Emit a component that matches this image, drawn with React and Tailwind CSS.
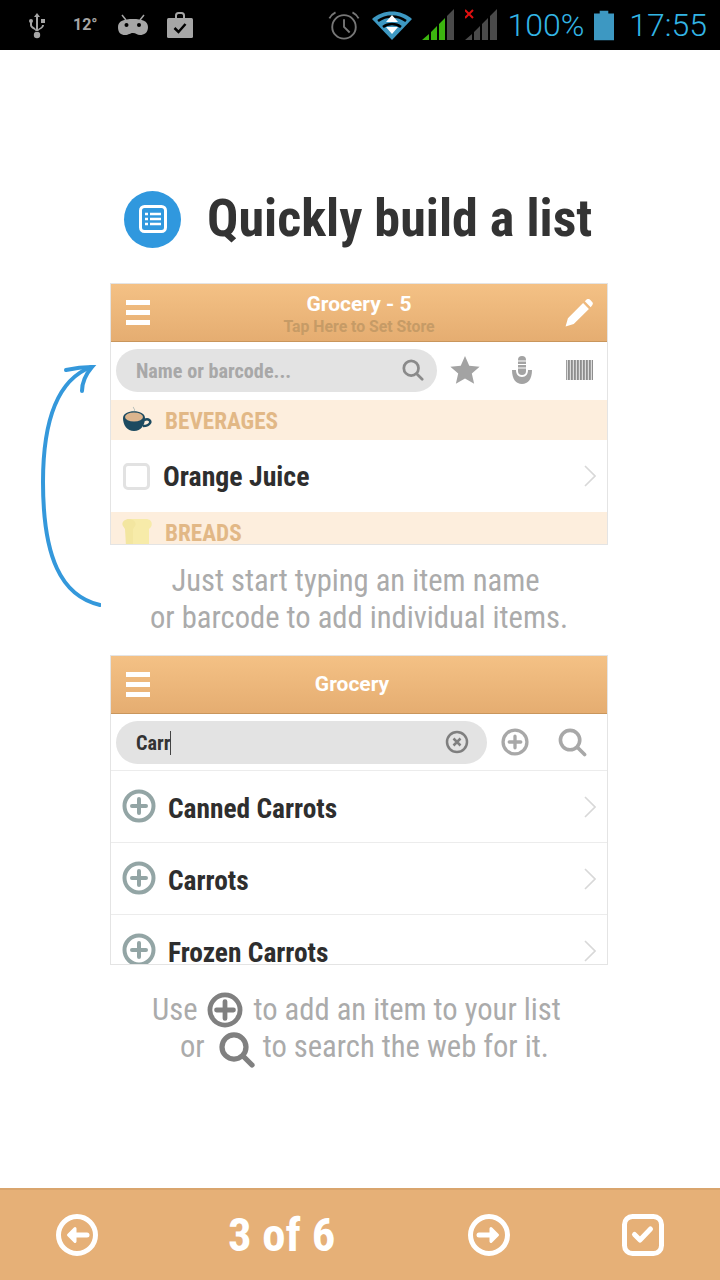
import React from 'react';

const font = "font-['Roboto',sans-serif] [font-stretch:75%]";

const Menu = () => (
  <div className="flex flex-col gap-[5px] w-6">
    <div className="h-[5px] bg-white" />
    <div className="h-[5px] bg-white" />
    <div className="h-[5px] bg-white" />
  </div>
);

const Search = ({ size = 24, color = '#8a8a8a', width = 3 }) => (
  <svg width={size} height={size} viewBox="0 0 24 24" fill="none" stroke={color} strokeWidth={width} strokeLinecap="round">
    <circle cx="10" cy="10" r="8" />
    <path d="M16 16l6 6" />
  </svg>
);

const PlusCircle = ({ size = 34, color = '#93a5a5', width = 4, arm = 7 }) => (
  <svg width={size} height={size} viewBox="0 0 34 34" fill="none" stroke={color} strokeWidth={width} strokeLinecap="round">
    <circle cx="17" cy="17" r={17 - width / 2 - 0.5} />
    <path d={`M${17 - arm} 17h${arm * 2}M17 ${17 - arm}v${arm * 2}`} />
  </svg>
);

const Chevron = () => (
  <svg width="12" height="22" viewBox="0 0 12 22" fill="none" stroke="#d8d8d8" strokeWidth="1.6">
    <path d="M1 1l10 10L1 21" />
  </svg>
);

const Header = ({ children, right }) => (
  <div className="h-[58px] shrink-0 flex items-center justify-between pl-[15px] pr-[14px] bg-gradient-to-b from-[#f4c185] to-[#e5ad71] border-b border-[#c9965c]">
    <Menu />
    {children}
    {right || <div className="w-6" />}
  </div>
);

const Pill = ({ children, className }) => (
  <div className={`h-[43px] ml-[5px] rounded-full bg-[#e3e3e3] flex items-center justify-between pl-[20px] ${className}`}>
    {children}
  </div>
);

const StatusBar = () => (
  <div className="h-[50px] bg-black flex items-center relative shrink-0">
    <div className="flex items-center pl-[27px] flex-1">
      <svg width="20" height="26" viewBox="0 0 20 26" fill="#a6a6a6" className="mt-[1px]">
        <path d="M10 0l3 4h-2v14h-2V4H7z" />
        <circle cx="10" cy="22" r="3.2" />
        <path d="M9 19c0-3-6-3-6-7V9h2v3c0 2 4 2.500 4 5zM11 17c0-2 4-2 4-5h2c0 4-6 4-6 7z" />
        <circle cx="4" cy="8" r="2" />
        <rect x="14" y="6" width="4" height="4" />
      </svg>
      <span className="ml-[26px] w-[24px] text-[16px] font-bold text-[#a6a6a6] font-['Roboto',sans-serif]">12°</span>
      <svg width="30" height="22" viewBox="0 0 30 22" fill="#a6a6a6" className="ml-[21px]">
        <path d="M4 1l4 5M26 1l-4 5" stroke="#a6a6a6" strokeWidth="1.500" />
        <path d="M0 13c0-6 6-8 15-8s15 2 15 8-4 8-8 8c-3 0-4-2-7-2s-4 2-8 2-7-2-7-8z" />
        <circle cx="8.500" cy="11" r="2" fill="#000" />
        <circle cx="21" cy="11" r="2" fill="#000" />
      </svg>
      <svg width="26" height="26" viewBox="0 0 26 26" className="ml-[19px]">
        <path d="M9 6V3.500C9 2 10 1 11.500 1h3C16 1 17 2 17 3.500V6" fill="none" stroke="#a6a6a6" strokeWidth="2" />
        <rect y="6" width="26" height="20" rx="1.500" fill="#a6a6a6" />
        <path d="M7.500 16l4 4 7-8" fill="none" stroke="#000" strokeWidth="2.500" />
      </svg>
    </div>
    <div className="flex items-center pr-[13px]">
      <svg width="32" height="30" viewBox="0 0 34 30" fill="none" stroke="#777" strokeWidth="2">
        <circle cx="17" cy="17" r="12.500" />
        <path d="M17 9v8l6 6" />
        <path d="M1.500 8C3 5 5 3 8 1.500M32.500 8C31 5 29 3 26 1.500" />
      </svg>
      <svg width="40" height="30" viewBox="0 0 40 30" className="ml-[12px]">
        <path d="M0 9C11-1 29-1 40 9L20 30z" fill="#3d98c2" />
        <path d="M6 11c8-6 20-6 28 0M11 17c5-4 13-4 18 0" fill="none" stroke="#000" strokeWidth="2.500" />
        <path d="M20 5l6 7H14zM20 24l6-7H14z" fill="#fff" />
      </svg>
      <svg width="32" height="32" viewBox="0 0 32 32" className="ml-[10px]">
        <path d="M0 31l7-6v6zM9 23l6-6v14H9zM17 15l6-6v22h-6z" fill="#3cb50f" />
        <path d="M25 7l7-7v31h-7z" fill="#4a4a4a" />
      </svg>
      <svg width="32" height="32" viewBox="0 0 32 32" className="ml-[11px]">
        <path d="M0 31l7-6v6zM9 23l6-6v14H9zM17 15l6-6v22h-6zM25 7l7-7v31h-7z" fill="#4a4a4a" />
        <path d="M0 1l8 8M8 1L0 9" stroke="#e01010" strokeWidth="2" />
      </svg>
      <span className="ml-[10px] text-[32px] leading-none text-[#33b5e5] font-['Roboto',sans-serif] font-light">100%</span>
      <svg width="20" height="31" viewBox="0 0 21 31" className="ml-[10px]">
        <path d="M6 0h9v3h6v28H0V3h6z" fill="#3d98c2" />
      </svg>
      <span className="ml-[15px] text-[32px] leading-none text-[#33b5e5] font-['Roboto',sans-serif] font-light">17:55</span>
    </div>
  </div>
);

const FirstPanel = () => (
  <div className="w-[498px] h-[262px] overflow-hidden border border-[#e4e4e4] flex flex-col bg-white">
    <Header
      right={
        <svg width="28" height="28" viewBox="0 0 24 24" fill="#fff">
          <path d="M0.500 23.500l2-7L15.500 3.500l5 5L7.500 21.500zM17 2l1.500-1.500c.8-.8 2-.8 2.800 0l2 2c.8.8.8 2 0 2.800L22 7z" />
        </svg>
      }
    >
      <div className="flex flex-col items-center ml-[3px] -mb-[2px]">
        <span className="text-[21px] leading-[26px] font-bold text-white font-['Roboto',sans-serif]">Grocery - 5</span>
        <span className="text-[15.8px] leading-[20px] font-bold text-[#c69b66] font-['Roboto',sans-serif]">Tap Here to Set Store</span>
      </div>
    </Header>
    <div className="h-[58px] shrink-0 flex items-center pb-[2px]">
      <Pill className="w-[321px] pr-[13px]">
        <span className={`mt-[2px] text-[20.2px] font-bold text-[#a8a8a8] ${font}`}>Name or barcode...</span>
        <Search size={22} />
      </Pill>
      <svg width="30" height="28" viewBox="0 0 24 23" fill="#a3a3a3" className="ml-[13px]">
        <path d="M12 0l3.500 8 8.500.8-6.400 5.600 1.900 8.400L12 18.400 4.500 22.800l1.900-8.400L0 8.800 8.500 8z" />
      </svg>
      <svg width="22" height="28" viewBox="0 0 22 28" className="ml-[31px]">
        <path d="M1 14h4c0 4 2 7 6 7s6-3 6-7h4c0 9-4 14-10 14S1 23 1 14z" fill="#a3a3a3" />
        <rect x="7" y="0" width="8" height="19" rx="4" fill="#a3a3a3" />
        <path d="M7 5h8M7 8.500h8M7 12h8" stroke="#fff" strokeWidth="1" />
      </svg>
      <div className="ml-[33px] w-[27px] h-[20px] bg-[repeating-linear-gradient(90deg,#9e9e9e_0,#9e9e9e_1px,#dcdcdc_1px,#dcdcdc_2px,#8e8e8e_2px,#8e8e8e_3px)]" />
    </div>
    <div className="h-[40px] shrink-0 bg-[#fdeedd] flex items-center pl-[11px]">
      <svg width="30" height="30" viewBox="0 0 30 30" className="-mt-[3px]">
        <path d="M12 3c-2 1 2 2 0 4" fill="none" stroke="#9aa" strokeWidth="0.800" />
        <path d="M1 14c0-9 22-9 22 0 0 7-4 13-11 13S1 21 1 14z" fill="#1c4a60" />
        <ellipse cx="12" cy="13" rx="9" ry="4.500" fill="#dcb58e" />
        <path d="M22 16c5-2 7 1 6 3s-4 3-7 3" fill="none" stroke="#1c4a60" strokeWidth="2.500" />
      </svg>
      <span className={`ml-[13px] mt-[2px] text-[23.2px] font-bold text-[#e2b886] ${font}`}>BEVERAGES</span>
    </div>
    <div className="h-[72px] shrink-0 flex items-center justify-between pl-[12px] pr-[11px]">
      <div className="flex items-center">
        <div className="w-[27px] h-[27px] rounded-[5px] border-[3px] border-[#e2e2e2]" />
        <span className={`ml-[13px] mt-[1px] text-[27.8px] font-bold text-[#2e2e2e] ${font}`}>Orange Juice</span>
      </div>
      <Chevron />
    </div>
    <div className="h-[40px] shrink-0 bg-[#fdeedd] flex items-start pl-[11px]">
      <svg width="30" height="28" viewBox="0 0 30 28" className="mt-[6px]">
        <path d="M9 1h15c5 0 7 4 5 8l-2 2v17H10z" fill="#f7eba9" />
        <path d="M7 1C2 1-1 5 1 8l2 3 1 17h7V11l2-3C15 5 12 1 7 1z" fill="#f3e6a0" />
      </svg>
      <span className={`ml-[13px] mt-[4px] text-[23.2px] font-bold text-[#e2b886] ${font}`}>BREADS</span>
    </div>
  </div>
);

const Row = ({ name }) => (
  <div className="h-[72px] shrink-0 flex items-center justify-between pl-[11px] pr-[11px] border-b border-[#ececec]">
    <div className="flex items-center">
      <PlusCircle />
      <span className={`ml-[12px] mt-[7px] text-[27.4px] font-bold text-[#2e2e2e] ${font}`}>{name}</span>
    </div>
    <Chevron />
  </div>
);

const SecondPanel = () => (
  <div className="w-[498px] h-[310px] overflow-hidden border border-[#e4e4e4] flex flex-col bg-white">
    <Header>
      <span className="text-[21px] font-bold text-white mt-[1px] mr-[15px] font-['Roboto',sans-serif]">Grocery</span>
    </Header>
    <div className="h-[57px] shrink-0 flex items-center border-b border-[#ececec]">
      <Pill className="w-[371px] pr-[18px]">
        <span className={`mt-[2px] text-[20.2px] font-bold text-[#333] border-r border-[#444] leading-[24px] ${font}`}>Carr</span>
        <svg width="24" height="24" viewBox="0 0 24 24" fill="none" stroke="#7f7f7f" strokeWidth="2.500">
          <circle cx="12" cy="12" r="10" />
          <path d="M8.500 8.500l7 7M15.500 8.500l-7 7" />
        </svg>
      </Pill>
      <div className="ml-[14px]"><PlusCircle size={28} color="#a8a8a8" width={4} /></div>
      <div className="ml-[29px]"><Search size={29} color="#a8a8a8" width={3} /></div>
    </div>
    <Row name="Canned Carrots" />
    <Row name="Carrots" />
    <Row name="Frozen Carrots" />
  </div>
);

const NavArrow = ({ right }) => (
  <svg width="42" height="42" viewBox="0 0 42 42" fill="none" stroke="#fff" strokeWidth="5" strokeLinecap="round" strokeLinejoin="round">
    <circle cx="21" cy="21" r="18.500" />
    {right ? (
      <>
        <path d="M11 21h12" />
        <path d="M23 14.500l6.500 6.500-6.500 6.500z" fill="#fff" strokeWidth="3" />
      </>
    ) : (
      <>
        <path d="M31 21H19" />
        <path d="M19 14.500L12.500 21l6.500 6.500z" fill="#fff" strokeWidth="3" />
      </>
    )}
  </svg>
);

export default function App() {
  return (
    <div className="w-[720px] h-[1280px] flex flex-col bg-white overflow-hidden">
      <StatusBar />
      <div className="flex-1 flex flex-col items-start relative">
        <div className="flex items-center mt-[137px] ml-[124px] h-[60px]">
          <div className="w-[57px] h-[57px] rounded-full bg-[#3098de] flex items-center justify-center mt-[4px]">
            <svg width="28" height="28" viewBox="0 0 28 28" fill="none">
              <rect x="1.500" y="1.500" width="25" height="25" rx="4" stroke="#fff" strokeWidth="3" />
              <path d="M6 9h3M11 9h11M6 14h3M11 14h11M6 19h3M11 19h11" stroke="#fff" strokeWidth="2.500" />
            </svg>
          </div>
          <h1 className={`ml-[26px] mt-[3px] text-[52.1px] leading-[60px] font-bold text-[#333] ${font}`}>Quickly build a list</h1>
        </div>
        <div className="ml-[110px] mt-[36px]">
          <FirstPanel />
        </div>
        <svg width="60" height="248" viewBox="0 0 60 248" fill="none" stroke="#3498db" strokeWidth="4" strokeLinecap="round" className="absolute left-[41px] top-[312px]">
          <path d="M59 243C20 234 2 195 2 120 2 60 16 18 50 5" />
          <path d="M25 8C34 6 43 5 51 5 45 12 41 20 41 29" />
        </svg>
        <p className={`ml-[110px] w-[496px] mt-[17px] text-center text-[30.6px] leading-[37px] text-[#ababab] ${font}`}>
          <span className="pr-[5px]">Just start typing an item name</span><br /><span className="pl-[2px]">or barcode to add individual items.</span>
        </p>
        <div className="ml-[110px] mt-[19px]">
          <SecondPanel />
        </div>
        <div className={`mt-[26px] ml-[152px] text-[30.6px] leading-[37px] text-[#ababab] ${font}`}>
          <div className="flex items-center h-[37px]">
            <span>Use</span>
            <span className="ml-[10px] mr-[10px]"><PlusCircle size={36} color="#808080" width={4.500} arm={8} /></span>
            <span>to add an item to your list</span>
          </div>
          <div className="flex items-center h-[37px] pl-[28px]">
            <span>or</span>
            <span className="ml-[14px] mr-[8px] mt-[7px]"><Search size={36} color="#808080" width={3.500} /></span>
            <span>to search the web for it.</span>
          </div>
        </div>
      </div>
      <div className="h-[92px] shrink-0 bg-[#e6b077] border-t-2 border-[#d9a56d] flex items-center pl-[56px]">
        <NavArrow />
        <span className={`ml-[130px] w-[110px] text-[46.7px] font-bold text-white whitespace-nowrap ${font}`}>3 of 6</span>
        <div className="ml-[130px]"><NavArrow right /></div>
        <svg width="42" height="42" viewBox="0 0 42 42" fill="none" stroke="#fff" strokeLinecap="round" strokeLinejoin="round" className="ml-[112px]">
          <rect x="2.500" y="2.500" width="37" height="37" rx="8" strokeWidth="5" />
          <path d="M12.500 20.500l5.500 5.500 10.500-11" strokeWidth="5" />
        </svg>
      </div>
    </div>
  );
}
